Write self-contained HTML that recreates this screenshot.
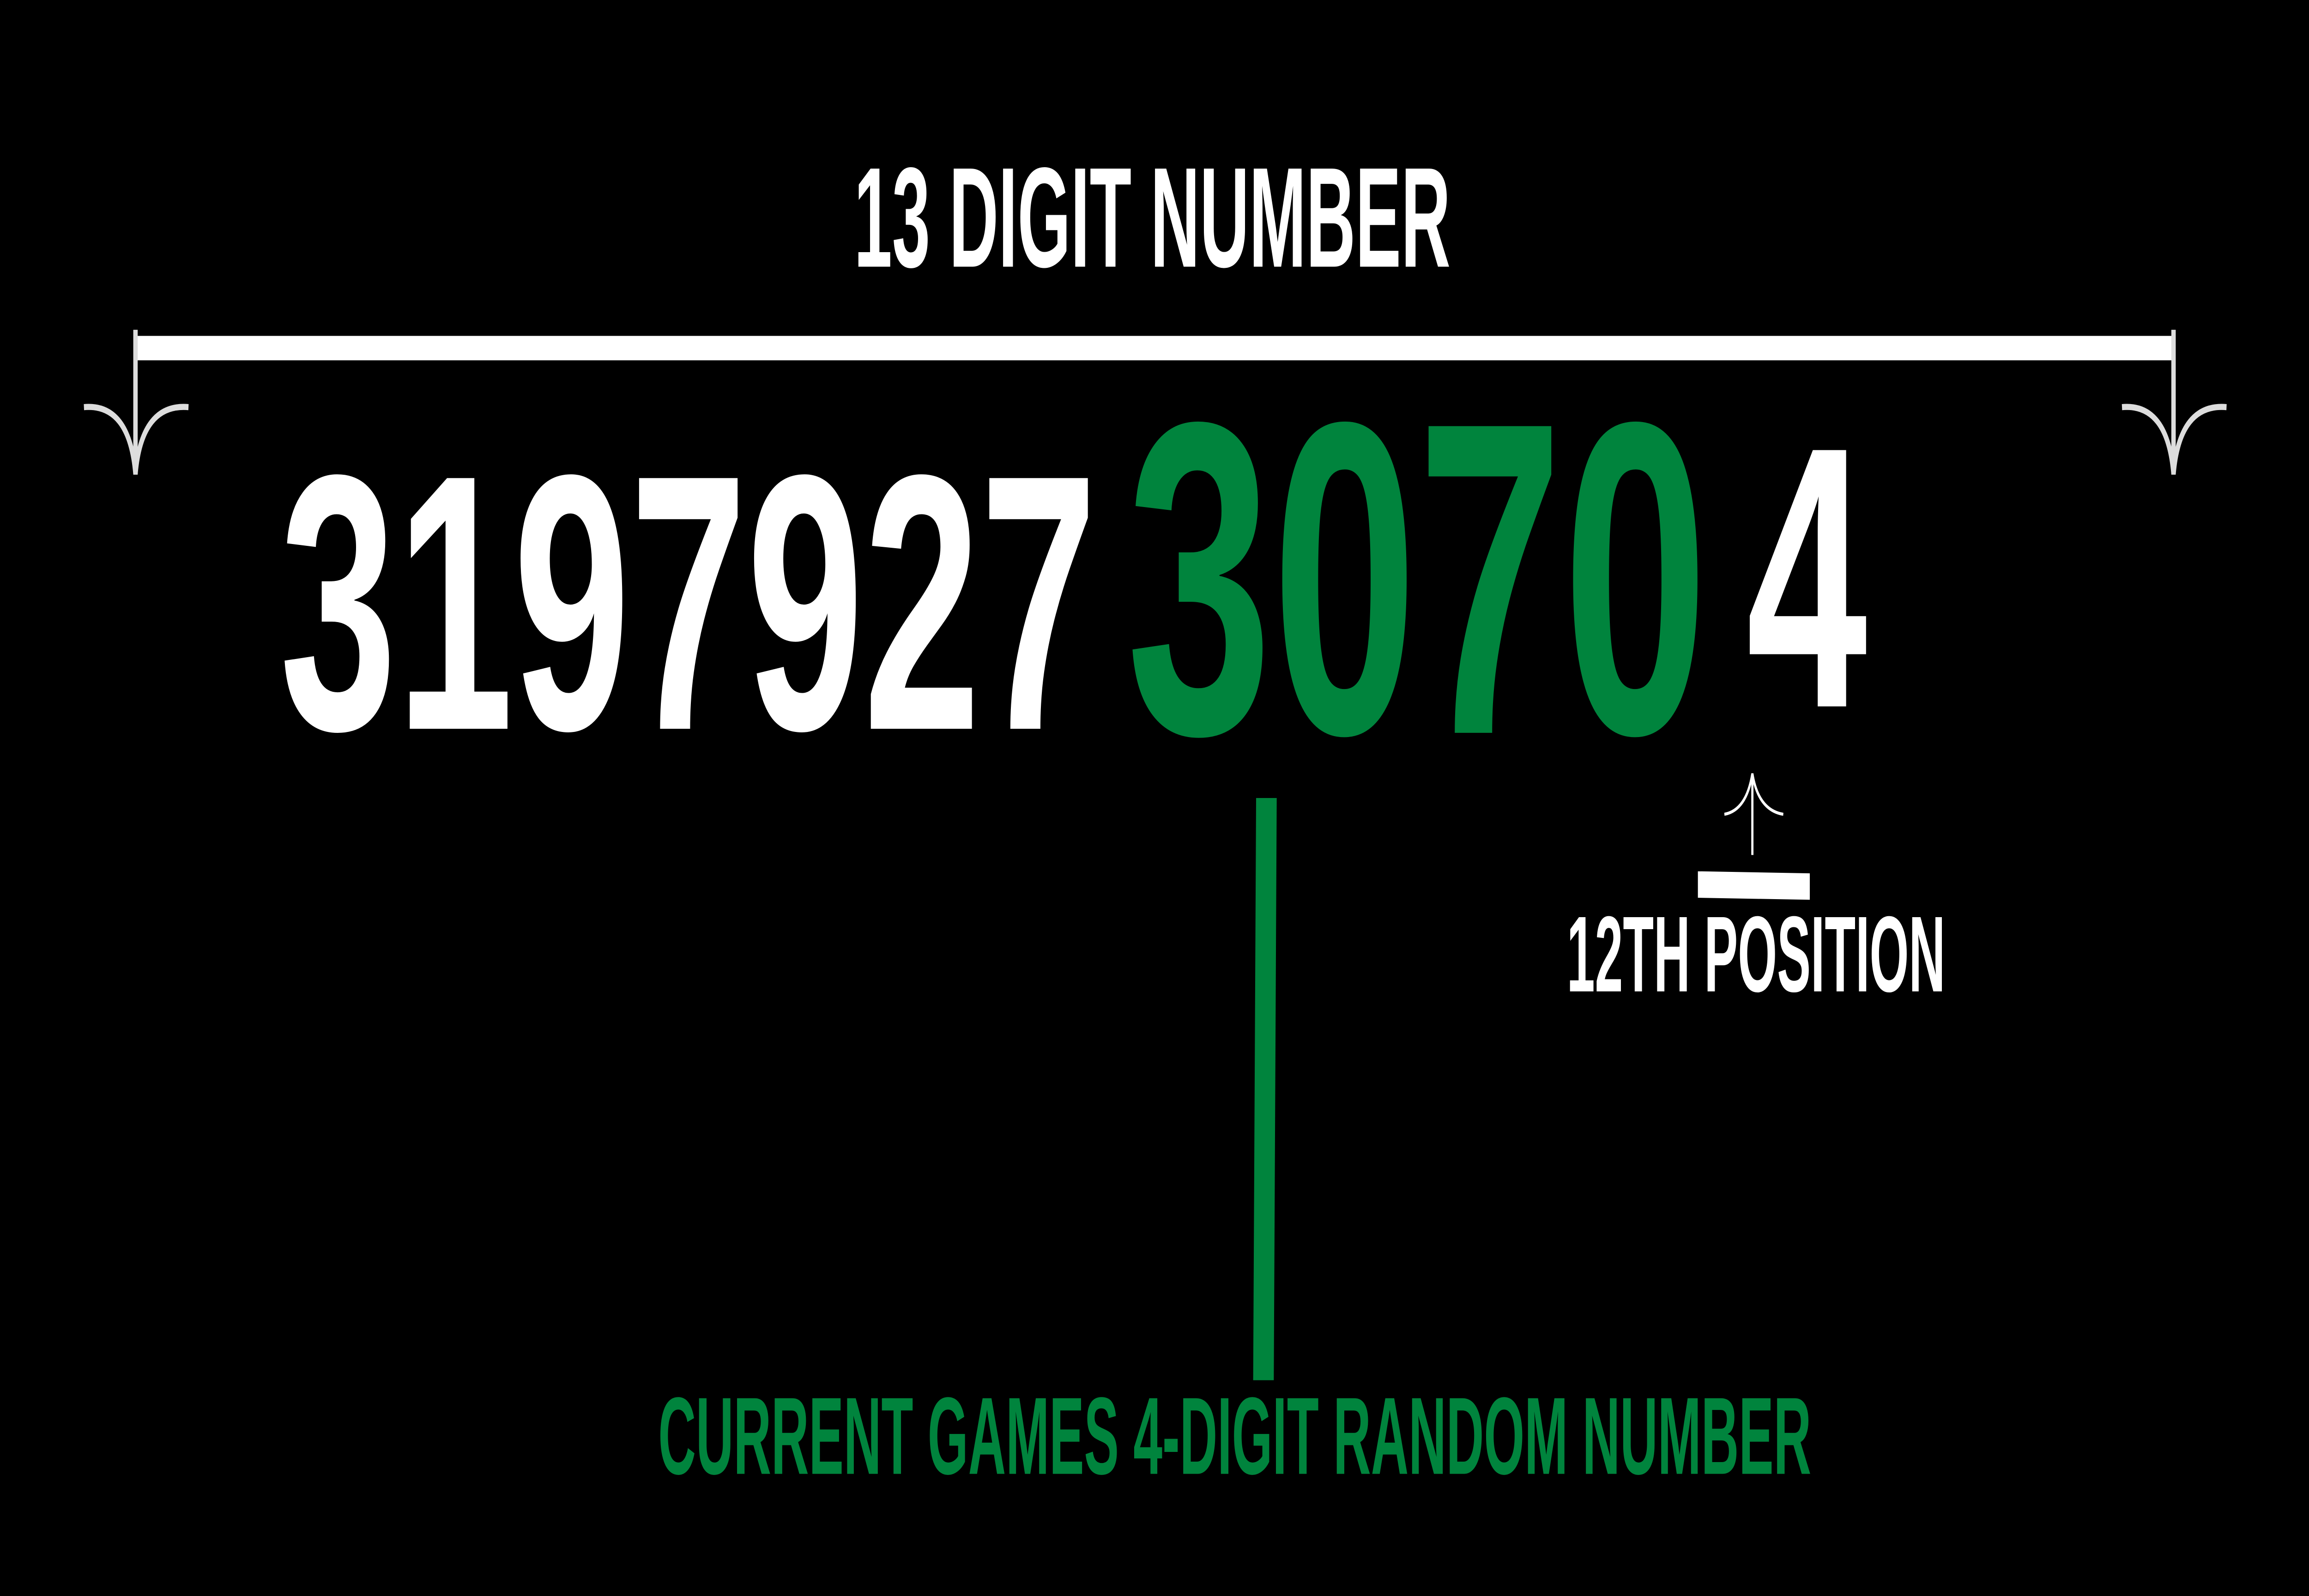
<!DOCTYPE html>
<html><head><meta charset="utf-8"><style>
html,body{margin:0;padding:0;background:#000;width:100%;height:100%;overflow:hidden}
svg{display:block;width:100vw;height:100vh}
text{font-family:"Liberation Sans Narrow","Liberation Sans",sans-serif;font-weight:bold}
</style></head><body>
<svg viewBox="0 0 1568 784" preserveAspectRatio="none" xmlns="http://www.w3.org/2000/svg">
<rect width="1568" height="784" fill="#000"/>
<text x="580" y="131" font-size="70" fill="#fff" textLength="405" lengthAdjust="spacingAndGlyphs">13 DIGIT NUMBER</text>
<rect x="92" y="165" width="1384" height="12" fill="#fff"/>
<g stroke="#ddd" stroke-width="3" fill="none">
<line x1="92" y1="162" x2="92" y2="233"/>
<path d="M57 200 Q88 198 92 233 Q96 198 128 200"/>
<line x1="1476" y1="162" x2="1476" y2="233"/>
<path d="M1441 200 Q1472 198 1476 233 Q1480 198 1512 200"/>
</g>
<text x="190" y="358" font-size="179" fill="#fff" textLength="555" lengthAdjust="spacingAndGlyphs">3197927</text>
<text x="765" y="360" font-size="219" fill="#00843d" textLength="395" lengthAdjust="spacingAndGlyphs">3070</text>
<text x="1186" y="347" font-size="183" fill="#fff" textLength="82" lengthAdjust="spacingAndGlyphs">4</text>
<polygon points="853,392 867,392 865,678 851,678" fill="#00843d"/>
<text x="447" y="724" font-size="54" fill="#00843d" textLength="783" lengthAdjust="spacingAndGlyphs">CURRENT GAMES 4-DIGIT RANDOM NUMBER</text>
<g stroke="#fff" stroke-width="1.5" fill="none">
<line x1="1190" y1="380" x2="1190" y2="420"/>
<path d="M1171 400 Q1186 398 1190 380 Q1194 398 1211 400"/>
</g>
<polygon points="1153,428 1229,429 1229,442 1153,441" fill="#fff"/>
<text x="1064" y="487" font-size="53" fill="#fff" textLength="257" lengthAdjust="spacingAndGlyphs">12TH POSITION</text>
</svg>
</body></html>
